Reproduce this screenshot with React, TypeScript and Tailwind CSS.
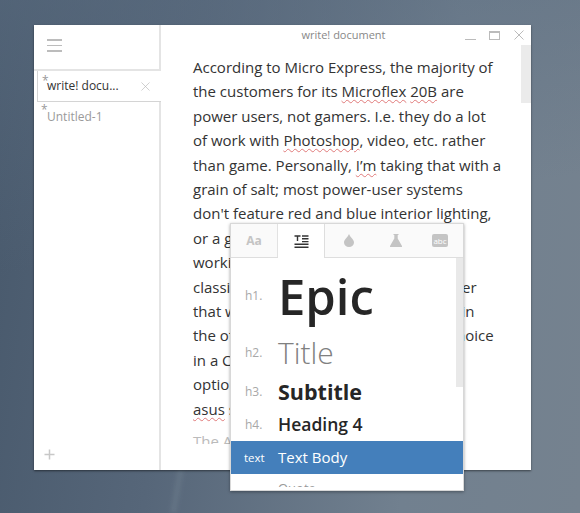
import { X } from 'lucide-react'

const LINES = [
  [{ t: 'According to Micro Express, the majority of' }],
  [{ t: 'the customers for its ' }, { t: 'Microflex', bad: true }, { t: ' ' }, { t: '20B', bad: true }, { t: ' are' }],
  [{ t: 'power users, not gamers. I.e. they do a lot' }],
  [{ t: 'of work with ' }, { t: 'Photoshop', bad: true }, { t: ', video, etc. rather' }],
  [{ t: 'than game. Personally, ' }, { t: 'I’m', bad: true }, { t: ' taking that with a' }],
  [{ t: 'grain of salt; most power-user systems' }],
  [{ t: "don't feature red and blue interior lighting," }],
  [{ t: 'or a gaudy case. For anybody who is' }],
  [{ t: 'working on a machine like this one' }],
  [{ t: 'classic styling is a better fit, and any user' }],
  [{ t: 'that wants a silent box will find it here in' }],
  [{ t: 'the other hand this is a really strong choice' }],
  [{ t: 'in a Core i7 system with plenty of' }],
  [{ t: 'options for upgrades later on, and' }],
  [{ t: 'asus', bad: true }, { t: ' support too' }],
]

const STYLES = [
  { tag: 'h1.', label: 'Epic', cls: 'h-[76px] text-[49px] font-semibold text-[#262626]' },
  { tag: 'h2.', label: 'Title', cls: 'h-[37px] text-[30px] font-light text-[#808080]' },
  { tag: 'h3.', label: 'Subtitle', cls: 'h-[42px] text-[21.5px] font-bold text-[#262626]' },
  { tag: 'h4.', label: 'Heading 4', cls: 'h-[28px] pb-[5px] text-[17.5px] font-semibold text-[#262626]' },
]

function Tabs() {
  return (
    <div className="flex h-[34px] shrink-0 border-b border-[#dedede] bg-[#fafafa]">
      <div className="flex w-[47px] items-center justify-center border-r border-[#e2e2e2] text-[12px] font-bold text-[#c4c4c4]">
        Aa
      </div>
      <div className="-mb-px flex w-[47px] items-center justify-center border-r border-[#dedede] bg-white">
        <svg width="15" height="13" viewBox="0 0 15 13" fill="none" stroke="#333" strokeWidth="1.4">
          <path d="M0.5 1h6M3.5 1v5M8 1h6.5M8 3.8h6.5M8 6.6h6.5M0.5 9.3h14M0.5 12.2h14" />
        </svg>
      </div>
      <div className="flex flex-1 items-center justify-between pl-[19px] pr-[15px]">
        <svg width="10" height="13" viewBox="0 0 10 13" fill="#c4c4c4">
          <path d="M5 0C4 3 0 5.5 0 8.4a5 4.6 0 0 0 10 0C10 5.5 6 3 5 0z" />
        </svg>
        <svg width="12" height="13" viewBox="0 0 12 13" fill="#c4c4c4" className="ml-[6px]">
          <path d="M3.5 0h5v1h-.8v3.4L12 12a.7.7 0 0 1-.6 1H.6A.7.7 0 0 1 0 12l4.3-7.6V1h-.8z" />
        </svg>
        <div className="flex h-[13px] w-[16px] items-center justify-center rounded-[2px] bg-[#c4c4c4] text-[8px] leading-none text-white">
          abc
        </div>
      </div>
    </div>
  )
}

function StylePopup() {
  return (
    <div className="absolute left-[230px] top-[223px] flex h-[268px] w-[234px] flex-col overflow-hidden border border-[#d8d8d8] bg-white shadow-[0_1px_3px_rgba(0,0,0,0.35)]">
      <Tabs />
      <div className="relative min-h-0 flex-1 overflow-hidden">
        <div className="absolute right-0 top-0 h-[129px] w-[7px] bg-[#e9e9e9]" />
        {STYLES.map((s) => (
          <div key={s.tag} className={`flex items-center ${s.cls}`}>
            <span className="w-[47px] shrink-0 pl-[14px] text-[12px] font-normal text-[#a8a8a8]">{s.tag}</span>
            <span className="leading-none">{s.label}</span>
          </div>
        ))}
        <div className="flex h-[33px] items-center bg-[#447fbb] text-white">
          <span className="w-[47px] shrink-0 pl-[13px] text-[11.5px]">text</span>
          <span className="text-[15px] leading-none">Text Body</span>
        </div>
        <div className="flex h-[13px] items-start overflow-hidden pt-[8px] text-[#999]">
          <span className="w-[47px] shrink-0" />
          <span className="text-[13px] leading-none">Quote</span>
        </div>
      </div>
    </div>
  )
}

export default function App() {
  return (
    <div className="relative h-[513px] w-[580px] overflow-hidden bg-[linear-gradient(170deg,rgba(90,108,128,0.55)_0%,rgba(70,88,108,0)_45%),linear-gradient(97deg,#48596c_0%,#566679_32%,#71808f_72%,#75828f_100%)] pl-[34px] pt-[25px] font-['Open_Sans','Noto_Sans',sans-serif]">
      <div className="absolute bottom-0 left-[174px] h-[44px] w-[6px] rotate-[10deg] bg-[#8090a0]/25 blur-[2px]" />
      <div className="relative flex h-[445px] w-[497px] bg-white shadow-[0_1px_2px_rgba(0,0,0,0.5)]">
        <aside className="flex w-[127px] shrink-0 flex-col border-r-2 border-[#e4e4e4]">
          <div className="-mr-[2px] flex h-[46px] shrink-0 items-start border-b-2 border-r-2 border-[#e4e4e4] pl-[13px] pt-[14px]">
            <div className="flex w-[15px] flex-col gap-[4px]">
              <div className="h-[1.5px] bg-[#bcbcbc]" />
              <div className="h-[1.5px] bg-[#bcbcbc]" />
              <div className="h-[1.5px] bg-[#bcbcbc]" />
            </div>
          </div>
          <div className="relative z-10 -mr-[2px] ml-[3px] flex h-[31px] shrink-0 items-center border-b border-l border-[#d4d4d4] bg-white pl-[9px] pr-[8px] text-[12px] text-[#333]">
            <span className="absolute left-[4px] top-[1px] text-[12px] text-[#999]">*</span>
            <span className="flex-1">write! docu...</span>
            <X size={15} strokeWidth={1} className="text-[#b4b4b4]" />
          </div>
          <div className="relative pl-[13px] pt-[6px] text-[12px] text-[#9a9a9a]">
            <span className="absolute left-[7px] top-[-1px] text-[12px]">*</span>
            Untitled-1
          </div>
          <div className="mt-auto pb-[10px] pl-[10px] text-[#c8c8c8]">
            <svg width="11" height="11" viewBox="0 0 11 11" stroke="currentColor" strokeWidth="1.5" className="block">
              <path d="M5.5 0.5v10M0.5 5.5h10" />
            </svg>
          </div>
        </aside>
        <main className="relative min-w-0 flex-1 overflow-hidden">
          <div className="flex h-[21px] items-center">
            <span className="w-full pr-[5px] text-center text-[11px] text-[#888]">write! document</span>
          </div>
          <div className="absolute right-0 top-[20px] h-[58px] w-[10px] bg-[#ebebeb]" />
          <div className="absolute right-[7px] top-[5px] flex items-center gap-[13px]">
            <div className="mt-[8px] h-px w-[11px] bg-[#bbb]" />
            <div className="mr-px h-[9px] w-[11px] border border-t-2 border-[#bbb]" />
            <svg width="10" height="10" viewBox="0 0 10 10" stroke="#bbb" strokeWidth="1">
              <path d="M0.5 0.5l9 9M9.5 0.5l-9 9" />
            </svg>
          </div>
          <article className="h-[398px] overflow-hidden whitespace-nowrap pl-[32px] pt-[9px] text-[15px] leading-[24.4px] text-[#333]">
            {LINES.map((line, i) => (
              <p key={i}>
                {line.map((part, j) =>
                  part.bad ? (
                    <span key={j} className="underline decoration-[#e07a7a] decoration-wavy decoration-1 underline-offset-2">
                      {part.t}
                    </span>
                  ) : (
                    <span key={j}>{part.t}</span>
                  ),
                )}
              </p>
            ))}
            <p className="pt-[8px] text-[#bbb]">The Asus</p>
          </article>
        </main>
      </div>
      <StylePopup />
    </div>
  )
}
